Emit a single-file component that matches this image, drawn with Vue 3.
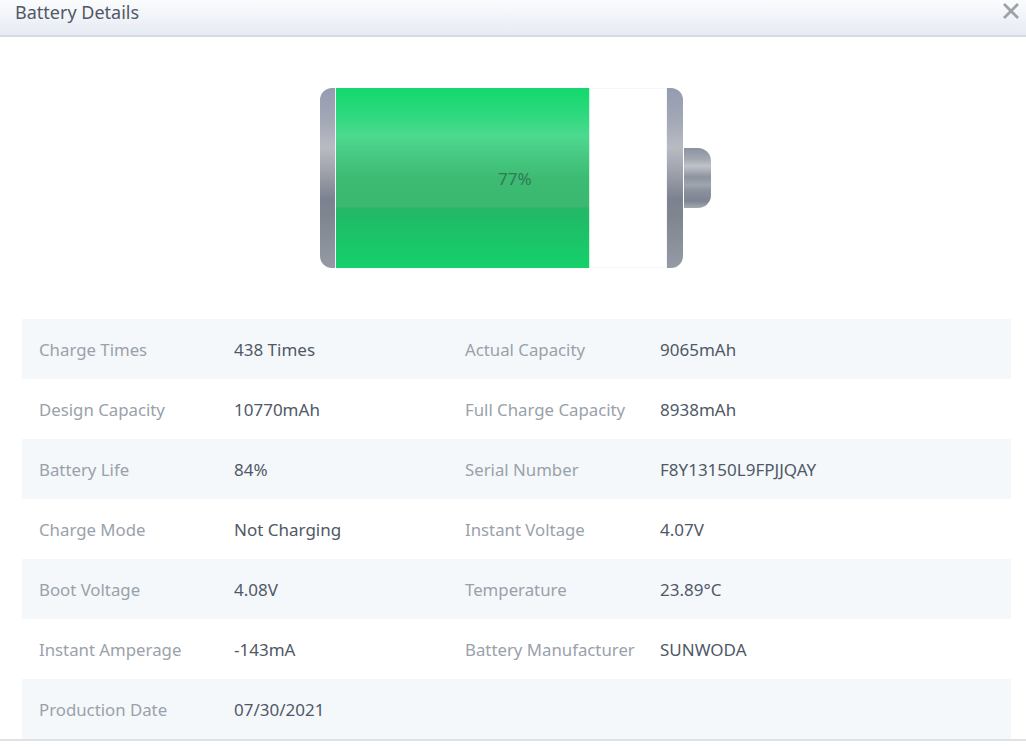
<script setup>
const rows = [
  ['Charge Times', '438 Times', 'Actual Capacity', '9065mAh'],
  ['Design Capacity', '10770mAh', 'Full Charge Capacity', '8938mAh'],
  ['Battery Life', '84%', 'Serial Number', 'F8Y13150L9FPJJQAY'],
  ['Charge Mode', 'Not Charging', 'Instant Voltage', '4.07V'],
  ['Boot Voltage', '4.08V', 'Temperature', '23.89°C'],
  ['Instant Amperage', '-143mA', 'Battery Manufacturer', 'SUNWODA'],
  ['Production Date', '07/30/2021', '', ''],
]
</script>

<template>
  <div class="dialog">
    <header class="head">
      <span class="title">Battery Details</span>
      <svg class="close" width="18" height="18" viewBox="0 0 18 18" aria-label="Close">
        <path d="M2 2 L16 16 M16 2 L2 16" stroke="#9da1a8" stroke-width="2.8" fill="none" />
      </svg>
    </header>

    <section class="battery-wrap">
      <div class="battery">
        <div class="cap cap-left"></div>
        <div class="cell">
          <div class="fill"></div>
        </div>
        <div class="cap cap-right"></div>
        <div class="nub"></div>
        <span class="pct">77%</span>
      </div>
    </section>

    <div class="table">
      <div v-for="(r, i) in rows" :key="i" class="row">
        <span class="k k1">{{ r[0] }}</span>
        <span class="v v1">{{ r[1] }}</span>
        <span class="k k2">{{ r[2] }}</span>
        <span class="v">{{ r[3] }}</span>
      </div>
    </div>
    <div class="bottom"></div>
  </div>
</template>

<style>
html, body { margin: 0; background: #fff; }
</style>

<style scoped>
.dialog {
  width: 1026px;
  height: 747px;
  background: #fff;
  font-family: "Noto Sans", "Open Sans", sans-serif;
  overflow: hidden;
}
.head {
  height: 35px;
  border-bottom: 2px solid #d6dbe2;
  background: linear-gradient(180deg, #fbfcfd 0%, #e6ebf3 100%);
  display: flex;
  align-items: flex-start;
  justify-content: space-between;
  padding: 0 6px 0 15px;
}
.title {
  font-size: 18px;
  line-height: 25px;
  color: #505866;
}
.close { margin-top: 2px; }
.battery-wrap {
  height: 282px;
  display: flex;
  padding-left: 320px;
  box-sizing: border-box;
  padding-top: 51px;
}
.battery {
  position: relative;
  display: flex;
  align-items: center;
  height: 180px;
  width: 391px;
}
.cap {
  height: 180px;
  flex: none;
  background: linear-gradient(180deg, #949cb0 0%, #a3a8b6 18%, #b9bbc3 33%, #a2a5ae 45%, #7b8190 62%, #80868f 72%, #959ba4 100%);
}
.cap-left { width: 15px; border-radius: 12px 0 0 12px; }
.cap-right { width: 16px; border-radius: 0 12px 12px 0; }
.cell {
  width: 332px;
  height: 180px;
  flex: none;
  box-sizing: border-box;
  padding-left: 1px;
  box-shadow: inset 0 0 0 1px #f3f5f7;
  background: #fff;
}
.fill {
  width: 253px;
  height: 100%;
  background: linear-gradient(180deg,
    #12d96c 0%, #2ed97f 15%, #4dd98f 27%, #46c882 38%, #3dbb72 50%, #3cb870 66%,
    #24b768 66.7%, #1dc168 80%, #15d16b 100%);
  box-shadow: 1px 0 0 #c9f5e0;
}
.nub {
  width: 27px;
  height: 60px;
  margin-left: 1px;
  flex: none;
  border-radius: 0 13px 13px 0;
  background: linear-gradient(180deg, #8b92a0 0%, #a2a7b0 18%, #c0c3c9 30%, #8d94a0 48%, #9fa4ad 62%, #8a909c 72%, #7d8493 88%, #a4a8b0 100%);
}
.pct {
  position: absolute;
  left: 178px;
  top: 79px;
  font-size: 17px;
  line-height: 23px;
  color: #2f7a57;
}
.table {
  margin: 0 15px 0 21.5px;
}
.row {
  height: 60px;
  display: grid;
  grid-template-columns: 212.5px 231px 195px 1fr;
  align-items: center;
  font-size: 17px;
  color: #505866;
}
.row:nth-child(odd) { background: #f5f8fb; }
.k { color: #9aa1aa; font-size: 16.8px; }
.k1 { padding-left: 17.5px; }
.bottom {
  height: 2px;
  background: #dfe1e4;
}
</style>
